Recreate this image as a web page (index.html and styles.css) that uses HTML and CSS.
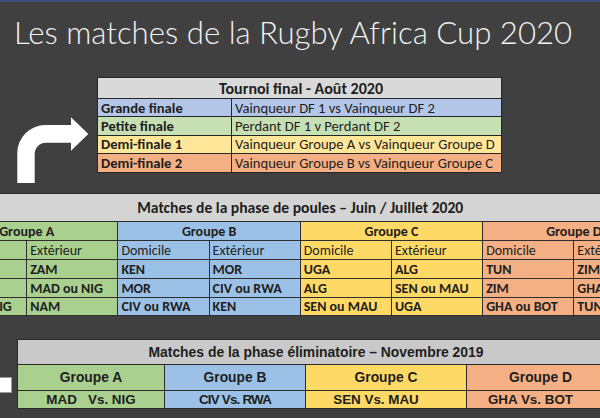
FILE: index.html
```html
<!DOCTYPE html>
<html lang="fr">
<head>
<meta charset="utf-8">
<title>Rugby Africa Cup 2020</title>
<link rel="stylesheet" href="styles.css">
</head>
<body>
<div class="topline"></div>
<h1 class="title">Les matches de la Rugby Africa Cup 2020</h1>

<section class="final-row">
  <svg class="arrow" viewBox="14 115 76 68" width="76" height="68" aria-hidden="true">
    <path d="M17.3 183 V153 A28 28 0 0 1 45.3 125 H71 V117.3 L88.3 134 L71 150.7 V142.7 H46 A11.3 11.3 0 0 0 34.7 154 V183 Z" fill="#ffffff"/>
  </svg>
  <div class="final">
    <div class="cell final-head">Tournoi final - Août 2020</div>
    <div class="cell lbl blue-l">Grande finale</div>
    <div class="cell blue-l">Vainqueur DF 1 vs Vainqueur DF 2</div>
    <div class="cell lbl green-l">Petite finale</div>
    <div class="cell green-l">Perdant DF 1 v Perdant DF 2</div>
    <div class="cell lbl yellow-l">Demi-finale 1</div>
    <div class="cell yellow-l">Vainqueur Groupe A vs Vainqueur Groupe D</div>
    <div class="cell lbl orange-l">Demi-finale 2</div>
    <div class="cell orange-l">Vainqueur Groupe B vs Vainqueur Groupe C</div>
  </div>
</section>

<div class="pool">
  <div class="cell pool-head">Matches de la phase de poules – Juin / Juillet 2020</div>
  <div class="cell grp green">Groupe A</div>
  <div class="cell grp blue">Groupe B</div>
  <div class="cell grp yellow">Groupe C</div>
  <div class="cell grp orange">Groupe D</div>

  <div class="cell sub green">Domicile</div><div class="cell sub green">Extérieur</div>
  <div class="cell sub blue">Domicile</div><div class="cell sub blue">Extérieur</div>
  <div class="cell sub yellow">Domicile</div><div class="cell sub yellow">Extérieur</div>
  <div class="cell sub orange">Domicile</div><div class="cell sub orange">Extérieur</div>

  <div class="cell team green">NAM</div><div class="cell team green">ZAM</div>
  <div class="cell team blue">KEN</div><div class="cell team blue">MOR</div>
  <div class="cell team yellow">UGA</div><div class="cell team yellow">ALG</div>
  <div class="cell team orange">TUN</div><div class="cell team orange">ZIM</div>

  <div class="cell team green">ZAM</div><div class="cell team green">MAD ou NIG</div>
  <div class="cell team blue">MOR</div><div class="cell team blue">CIV ou RWA</div>
  <div class="cell team yellow">ALG</div><div class="cell team yellow">SEN ou MAU</div>
  <div class="cell team orange">ZIM</div><div class="cell team orange">GHA ou BOT</div>

  <div class="cell team green">MAD ou NIG</div><div class="cell team green">NAM</div>
  <div class="cell team blue">CIV ou RWA</div><div class="cell team blue">KEN</div>
  <div class="cell team yellow">SEN ou MAU</div><div class="cell team yellow">UGA</div>
  <div class="cell team orange">GHA ou BOT</div><div class="cell team orange">TUN</div>
</div>

<section class="elim-row">
  <div class="stub"></div>
  <div class="elim">
    <div class="cell elim-head">Matches de la phase éliminatoire – Novembre 2019</div>
    <div class="cell egrp green">Groupe A</div>
    <div class="cell egrp blue">Groupe B</div>
    <div class="cell egrp yellow">Groupe C</div>
    <div class="cell egrp orange">Groupe D</div>
    <div class="cell ematch green">MAD   Vs. NIG</div>
    <div class="cell ematch blue tight">CIV Vs. RWA</div>
    <div class="cell ematch yellow shift">SEN Vs. MAU</div>
    <div class="cell ematch orange shift">GHA Vs. BOT</div>
  </div>
</section>
</body>
</html>
```

FILE: styles.css
```css
html, body {
  margin: 0;
  padding: 0;
}
body {
  width: 600px;
  height: 418px;
  overflow: hidden;
  background: #404040;
  font-family: Carlito, "Open Sans", "Liberation Sans", sans-serif;
  color: #1e1e1e;
}
.topline {
  height: 2px;
  background: #3b4e78;
}
.title {
  margin: 0;
  height: 75px;
  box-sizing: border-box;
  padding: 11px 0 0 14px;
  font-family: Lato, Carlito, "Open Sans", sans-serif;
  font-weight: 300;
  font-size: 31.2px;
  line-height: 38px;
  color: #f2f2f2;
  white-space: nowrap;
}
.cell {
  display: flex;
  align-items: center;
  white-space: nowrap;
  overflow: hidden;
  box-sizing: border-box;
}

/* final table */
.final-row {
  display: flex;
  align-items: flex-start;
  height: 96px;
}
.arrow {
  display: block;
  flex: none;
  margin: 38px 0 0 14px;
}
.final {
  flex: none;
  margin-left: 7px;
  display: grid;
  grid-template-columns: 133px 269px;
  grid-template-rows: 20px repeat(4, 17.4px);
  gap: 1px;
  padding: 1px;
  background: #262626;
  font-size: 14.6px;
}
.final .cell {
  padding-left: 3px;
}
.final-head {
  grid-column: 1 / 3;
  justify-content: center;
  background: #d9d9d9;
  font-weight: 700;
  font-size: 16px;
}
.lbl { font-weight: 700; }
.blue-l { background: #b4c6e7; }
.green-l { background: #c6e0b4; }
.yellow-l { background: #ffe699; }
.orange-l { background: #f4b084; }

/* pool table */
.pool {
  margin: 20px 0 0 -65px;
  width: max-content;
  display: grid;
  grid-template-columns: repeat(8, 90.2px);
  grid-template-rows: 27px 18px 18px 18px 18px 17px;
  gap: 1px;
  padding: 1px;
  background: #2e2e2e;
  font-size: 14px;
}
.pool-head {
  grid-column: 1 / 9;
  justify-content: center;
  background: #d4d4d4;
  font-weight: 700;
  font-size: 15.6px;
}
.grp {
  grid-column: span 2;
  justify-content: center;
  font-weight: 700;
}
.sub, .team { padding-left: 3px; }
.team { font-weight: 700; }
.green { background: #a9d08e; }
.blue { background: #9bc2e6; }
.yellow { background: #ffd966; }
.orange { background: #f4b084; }

/* elimination table */
.elim-row {
  display: flex;
  align-items: flex-start;
  margin-top: 23px;
}
.stub {
  flex: none;
  width: 12px;
  height: 16px;
  margin-top: 38px;
  background: #ffffff;
  border: 1px solid #9a9a9a;
  border-left: none;
  box-sizing: border-box;
}
.elim {
  flex: none;
  margin-left: 5px;
  width: max-content;
  display: grid;
  grid-template-columns: 146px 140px 160px 147px;
  grid-template-rows: 24px 25px 17px;
  gap: 1px;
  padding: 1px;
  background: #2a2a2a;
  font-family: "Liberation Sans", Arial, sans-serif;
  font-weight: 700;
  font-size: 13.9px;
}
.elim .cell { justify-content: center; }
.elim-head {
  grid-column: 1 / 5;
  background: #c9c9c9;
}
.egrp { font-size: 13.8px; }
.ematch {
  font-size: 13.4px;
  white-space: pre;
}
.tight { letter-spacing: -0.8px; }
.shift { padding-right: 20px; }
```
